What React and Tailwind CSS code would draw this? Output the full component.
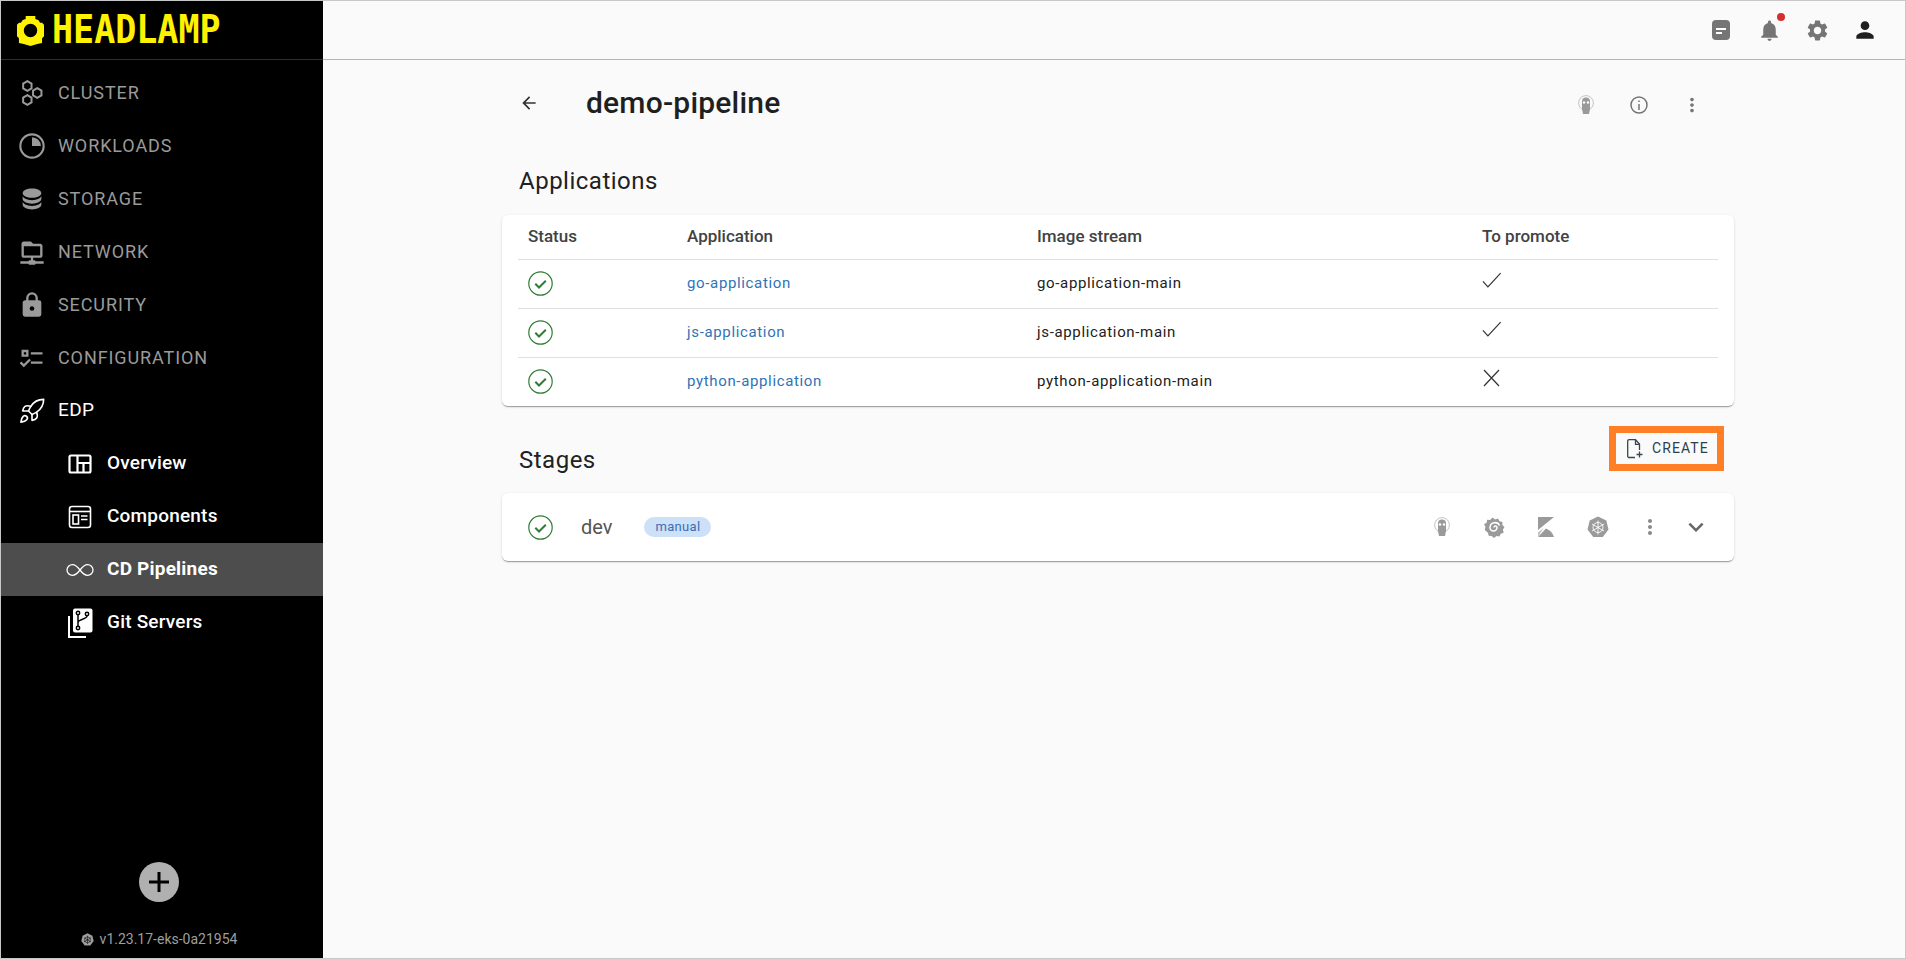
import { Rocket } from "lucide-react";
import {
  MdArrowBack,
  MdMoreVert,
  MdNotifications,
  MdPerson,
  MdSettings,
  MdExpandMore,
} from "react-icons/md";

const mdi = {
  database:
    "M12,3C7.58,3 4,4.79 4,7C4,9.21 7.58,11 12,11C16.42,11 20,9.21 20,7C20,4.79 16.42,3 12,3M4,9V12C4,14.21 7.58,16 12,16C16.42,16 20,14.21 20,12V9C20,11.21 16.42,13 12,13C7.58,13 4,11.21 4,9M4,14V17C4,19.21 7.58,21 12,21C16.42,21 20,19.21 20,17V14C20,16.21 16.42,18 12,18C7.58,18 4,16.21 4,14Z",
  network:
    "M15 20C15 19.45 14.55 19 14 19H13V17H19C20.11 17 21 16.11 21 15V7C21 5.9 20.11 5 19 5H13L11 3H5C3.9 3 3 3.9 3 5V15C3 16.11 3.9 17 5 17H11V19H10C9.45 19 9 19.45 9 20H2V22H9C9 22.55 9.45 23 10 23H14C14.55 23 15 22.55 15 22H22V20H15M5 15V7H19V15H5Z",
  lock:
    "M12,17A2,2 0 0,0 14,15C14,13.89 13.1,13 12,13A2,2 0 0,0 10,15A2,2 0 0,0 12,17M18,8A2,2 0 0,1 20,10V20A2,2 0 0,1 18,22H6A2,2 0 0,1 4,20V10C4,8.89 4.9,8 6,8H7V6A5,5 0 0,1 12,1A5,5 0 0,1 17,6V8H18M12,3A3,3 0 0,0 9,6V8H15V6A3,3 0 0,0 12,3Z",
  checks:
    "M3 5H9V11H3V5M5 7V9H7V7H5M11 7H21V9H11V7M11 15H21V17H11V15M5 20L1.5 16.5L2.91 15.09L5 17.17L9.59 12.59L11 14L5 20Z",
};

const Filled = ({ d, size = 28 }) => (
  <svg width={size} height={size} viewBox="0 0 24 24" fill="currentColor">
    <path d={d} />
  </svg>
);

const HexIcon = () => (
  <svg width="28" height="28" viewBox="0 0 24 24" fill="none" stroke="currentColor" strokeWidth="1.7">
    <path d="M8 1.8l3.6 2.1v4.2L8 10.2 4.4 8.1V3.9z" />
    <path d="M8 13.8l3.6 2.1v4.2L8 22.2l-3.6-2.1v-4.2z" />
    <path d="M16.5 7.8l3.6 2.1v4.2l-3.6 2.1-3.6-2.1V9.9z" />
  </svg>
);

const SliceIcon = () => (
  <svg width="28" height="28" viewBox="0 0 24 24" fill="none">
    <circle cx="12" cy="12" r="10" stroke="currentColor" strokeWidth="1.8" />
    <path d="M12 4.400a7.600 7.600 0 0 1 7.600 7.600H12z" fill="currentColor" />
  </svg>
);

const OverviewIcon = () => (
  <svg width="24" height="24" viewBox="0 0 24 24" fill="none" stroke="currentColor" strokeWidth="2.2">
    <rect x="1.500" y="3.500" width="21" height="17" rx="1.500" />
    <path d="M9.500 3.500v17M9.500 11H22M15.500 11v9" />
  </svg>
);

const ComponentsIcon = () => (
  <svg width="24" height="24" viewBox="0 0 24 24" fill="none" stroke="currentColor" strokeWidth="1.600">
    <rect x="1.500" y="1.500" width="21" height="21" rx="2.500" />
    <path d="M1.500 6.500h21" />
    <rect x="5" y="10" width="5.500" height="9" />
    <path d="M13 11h6.500M13 14.500h6.500" />
  </svg>
);

const InfinityIcon = () => (
  <svg width="30" height="18" viewBox="0 0 30 16" fill="none" stroke="currentColor" strokeWidth="1.300">
    <path d="M15 8c-2.500-3.400-4.700-5.400-7.600-5.400A5.400 5.400 0 0 0 2 8a5.400 5.400 0 0 0 5.400 5.400c2.900 0 5.100-2 7.600-5.400zm0 0c2.500-3.400 4.700-5.400 7.600-5.400A5.400 5.400 0 0 1 28 8a5.400 5.400 0 0 1-5.400 5.400c-2.900 0-5.100-2-7.600-5.400z" />
  </svg>
);

const GitIcon = () => (
  <svg width="26" height="30" viewBox="0 0 26 30" fill="none">
    <path d="M2 8v21h17" stroke="currentColor" strokeWidth="2" />
    <rect x="6" y="0.500" width="19.500" height="24" rx="2" fill="currentColor" />
    <g stroke="#000" strokeWidth="1.500">
      <circle cx="11" cy="5" r="1.700" />
      <circle cx="11" cy="20" r="1.700" />
      <circle cx="20" cy="6" r="1.700" />
      <path d="M11 6.700v11.600M20 7.700c0 4-9 3-9 7" />
    </g>
  </svg>
);

const LogoGear = () => (
  <svg width="27" height="31" viewBox="0 0 28 32">
    <path
      fillRule="evenodd"
      fill="#fff200"
      d="M9 1h10v3l3 1 2 3h2l2 2v12l-2 2v5l-5 1-7 2-7-2-5-1v-5l-2-2V10l2-2h2l2-3 3-1zM14 9a7 7 0 1 0 0 14 7 7 0 0 0 0-14z"
    />
  </svg>
);

const StatusIcon = () => (
  <svg width="25" height="25" viewBox="0 0 25 25" fill="none" stroke="#2e7d32">
    <circle cx="12.500" cy="12.500" r="11.700" strokeWidth="1.200" />
    <path d="M7.300 12.800l3.700 3.700 6.800-6.800" strokeWidth="2" />
  </svg>
);

const BulbIcon = ({ size = 20 }) => (
  <svg width={size} height={size} viewBox="0 0 20 20">
    <circle cx="10" cy="8" r="7.400" fill="none" stroke="#c4c4c4" strokeWidth="1" />
    <path d="M6 6.500a4 4 0 0 1 8 0V14l-1 5H7l-1-5z" fill="#9a9a9a" />
    <circle cx="8" cy="7.500" r="1.200" fill="#fff" />
    <circle cx="12" cy="7.500" r="1.200" fill="#fff" />
  </svg>
);

const GrafanaIcon = () => (
  <svg width="22" height="22" viewBox="0 0 22 22">
    <path
      d="M9.500 1.500l2.500 2 3-1 1.500 2.800 3 .7-.2 3 2.200 2-1.600 2.700.8 3-3 1-1.200 2.800-3-.4-2.500 1.800-2.300-2-3-.2-.8-3L1.800 14l.7-3-1.500-2.700 2.600-1.600.5-3 3 .3z"
      fill="#9a9a9a"
    />
    <path d="M11 11.500a1.500 1.500 0 0 1 3 0a3.500 3.500 0 0 1-7 0a5 5 0 0 1 9.500-2" fill="none" stroke="#fff" strokeWidth="1.500" />
  </svg>
);

const KibanaIcon = () => (
  <svg width="18" height="20" viewBox="0 0 18 20">
    <path d="M1 0h16L1 13z" fill="#9a9a9a" />
    <path d="M1 20l7.500-8 .5-.5C13 13 15.800 16 17 20z" fill="#9a9a9a" />
    <path d="M1 15.500L6.500 11 1 20z" fill="#c0c0c0" />
  </svg>
);

const K8sIcon = ({ size = 22, fill = "#9a9a9a", stroke = "#fff" }) => (
  <svg width={size} height={size} viewBox="0 0 22 22">
    <path d="M11 .5l8.300 4 2.200 9-5.700 7.500H6.200L.5 13.500l2.200-9z" fill={fill} />
    <g fill="none" stroke={stroke} strokeWidth="0.900">
      <circle cx="11" cy="11.500" r="5" />
      <path d="M11 4.500v14M5 8l12 7M17 8L5 15" />
    </g>
  </svg>
);

const NewFileIcon = () => (
  <svg width="18" height="20" viewBox="0 0 18 20" fill="none" stroke="#37474f" strokeWidth="1.300">
    <path d="M9 18.500H3a1.300 1.300 0 0 1-1.300-1.300V2a1.300 1.300 0 0 1 1.300-1.300h6.500l4 4.300V11" />
    <path d="M9.500 1v4.300h4" />
    <path d="M10.500 15.500h6M13.500 12.500v6" />
  </svg>
);

const NoteIcon = () => (
  <svg width="20" height="20" viewBox="0 0 20 20">
    <rect width="18" height="20" x="1" rx="4" fill="#757575" />
    <path d="M5 8h10v2H5zM5 12h6v2H5z" fill="#fff" />
  </svg>
);

const navItems = [
  { label: "CLUSTER", icon: <HexIcon /> },
  { label: "WORKLOADS", icon: <SliceIcon /> },
  { label: "STORAGE", icon: <Filled d={mdi.database} /> },
  { label: "NETWORK", icon: <Filled d={mdi.network} /> },
  { label: "SECURITY", icon: <Filled d={mdi.lock} /> },
  { label: "CONFIGURATION", icon: <Filled d={mdi.checks} /> },
];

const subItems = [
  { label: "Overview", icon: <OverviewIcon /> },
  { label: "Components", icon: <ComponentsIcon /> },
  { label: "CD Pipelines", icon: <InfinityIcon />, active: true },
  { label: "Git Servers", icon: <GitIcon /> },
];

const apps = [
  { name: "go-application", stream: "go-application-main", promote: true },
  { name: "js-application", stream: "js-application-main", promote: true },
  { name: "python-application", stream: "python-application-main", promote: false },
];

const Sidebar = () => (
  <aside className="flex w-[322px] shrink-0 flex-col bg-black">
    <div className="flex h-[59px] shrink-0 items-center gap-[8px] border-b border-[#2e2e2e] pl-[16px]">
      <LogoGear />
      <span className="inline-block scale-y-[1.12] font-['DejaVu_Sans_Mono',monospace] text-[35px] leading-none font-bold text-[#fff200]">
        HEADLAMP
      </span>
    </div>
    <nav className="flex flex-col pt-[6px]">
      {navItems.map((item) => (
        <div key={item.label} className="flex h-[53px] items-center text-[#9a9a9a]">
          <span className="flex w-[57px] justify-center pl-[5px]">{item.icon}</span>
          <span className="text-[18px] tracking-[0.9px]">{item.label}</span>
        </div>
      ))}
      <div className="flex h-[53px] items-center text-white">
        <span className="flex w-[57px] justify-center pl-[5px]">
          <Rocket size={28} strokeWidth={1.4} />
        </span>
        <span className="text-[19px] tracking-[0.4px]">EDP</span>
      </div>
      {subItems.map((item) => (
        <div
          key={item.label}
          className={`flex h-[53px] items-center text-white ${item.active ? "bg-[#4d4d4d] font-bold" : "font-medium"}`}
        >
          <span className="flex w-[106px] justify-center pl-[52px]">{item.icon}</span>
          <span className="text-[19px] tracking-[0.2px]">{item.label}</span>
        </div>
      ))}
    </nav>
    <div className="mt-auto flex flex-col items-center pr-[6px] pb-[9px]">
      <div className="flex h-[40px] w-[40px] items-center justify-center rounded-full bg-[#b0b0b0]">
        <svg width="24" height="24" viewBox="0 0 24 24" fill="#000">
          <path d="M10.500 2h3v8.500H22v3h-8.500V22h-3v-8.500H2v-3h8.500z" />
        </svg>
      </div>
      <div className="mt-[27px] flex items-center gap-[6px] text-[14px] leading-[20px] text-[#9e9e9e]">
        <K8sIcon size={13} fill="#9e9e9e" stroke="#000" />
        <span>v1.23.17-eks-0a21954</span>
      </div>
    </div>
  </aside>
);

const TopBar = () => (
  <header className="flex h-[59px] shrink-0 items-center justify-end border-b border-[#b5b5b5] pr-[16px]">
    <span className="flex w-[48px] justify-center"><NoteIcon /></span>
    <span className="relative flex w-[48px] justify-center text-[#757575]">
      <MdNotifications size={25} />
      <span className="absolute top-[-5px] right-[8px] h-[8px] w-[8px] rounded-full bg-[#d32f2f]" />
    </span>
    <span className="flex w-[48px] justify-center text-[#757575]"><MdSettings size={25} /></span>
    <span className="flex w-[48px] justify-center text-[#1f1f1f]"><MdPerson size={26} /></span>
  </header>
);

const Card = ({ className, children }) => (
  <div className={`rounded-[6px] bg-white shadow-[0_2px_1px_-1px_rgba(0,0,0,0.2),0_1px_1px_0_rgba(0,0,0,0.14),0_1px_3px_0_rgba(0,0,0,0.12)] ${className}`}>
    {children}
  </div>
);

const gridCols = "grid grid-cols-[159px_350px_445px_1fr] items-center pl-[10px]";

const ApplicationsTable = () => (
  <Card className="h-[191px] px-[16px]">
    <div className={`${gridCols} h-[45px] border-b border-[#e0e0e0] text-[17px] font-medium text-[#424242]`}>
      <span>Status</span>
      <span>Application</span>
      <span>Image stream</span>
      <span>To promote</span>
    </div>
    {apps.map((app, i) => (
      <div
        key={app.name}
        className={`${gridCols} pb-[2px] text-[15px] ${i < 2 ? "h-[49px] border-b border-[#e0e0e0]" : "h-[48px]"}`}
      >
        <StatusIcon />
        <span className="tracking-[0.65px] text-[#2f74b5]">{app.name}</span>
        <span className="tracking-[0.65px] text-[#212121]">{app.stream}</span>
        <span className="-mt-[6px]">
          {app.promote ? (
            <svg width="20" height="20" viewBox="0 0 22 22" fill="none" stroke="#333" strokeWidth="1.300">
              <path d="M1 12.500l5.500 6L20.500 3.500" />
            </svg>
          ) : (
            <svg width="19" height="20" viewBox="0 0 19 20" fill="none" stroke="#333" strokeWidth="1.200">
              <path d="M2 2l15 16M17 2L2 18" />
            </svg>
          )}
        </span>
      </div>
    ))}
  </Card>
);

const StageRow = () => (
  <Card className="flex h-[68px] items-center pr-[18px] pl-[26px]">
    <StatusIcon />
    <span className="ml-[28px] text-[20px] text-[#555]">dev</span>
    <span className="ml-[32px] flex h-[20px] w-[67px] items-center justify-center rounded-full bg-[#cce0f8] text-[13px] tracking-[0.3px] text-[#3f6db3]">
      manual
    </span>
    <div className="ml-auto flex items-center">
      <span className="flex w-[52px] justify-center"><BulbIcon /></span>
      <span className="flex w-[52px] justify-center"><GrafanaIcon /></span>
      <span className="flex w-[52px] justify-center"><KibanaIcon /></span>
      <span className="flex w-[52px] justify-center"><K8sIcon /></span>
      <span className="flex w-[52px] justify-center text-[#8a8a8a]"><MdMoreVert size={24} /></span>
      <span className="flex w-[40px] justify-center text-[#666]"><MdExpandMore size={30} /></span>
    </div>
  </Card>
);

const App = () => (
  <div className="flex h-[959px] w-[1906px] overflow-hidden border border-[#c8c8c8] bg-[#fafafa] font-['Roboto',sans-serif]">
    <Sidebar />
    <div className="flex min-w-0 flex-1 flex-col">
      <TopBar />
      <main className="w-[1411px] pl-[179px]">
        <div className="flex h-[86px] items-center pl-[17px]">
          <MdArrowBack size={20} className="text-[#333]" />
          <h1 className="-mt-[1px] ml-[47px] text-[30px] font-medium tracking-[0.2px] text-[#1f1f1f]">demo-pipeline</h1>
          <div className="mt-[4px] ml-auto flex items-center pr-[16px]">
            <span className="flex w-[53px] justify-center"><BulbIcon /></span>
            <span className="flex w-[53px] justify-center text-[#757575]">
              <svg width="20" height="20" viewBox="0 0 20 20" fill="none" stroke="currentColor" strokeWidth="1.500">
                <circle cx="10" cy="10" r="8" />
                <path d="M10 9v6M10 5.500v1.500" />
              </svg>
            </span>
            <span className="flex w-[53px] justify-center text-[#757575]"><MdMoreVert size={22} /></span>
          </div>
        </div>
        <div className="flex h-[69px] items-center pl-[17px]">
          <h2 className="text-[24px] tracking-[0.5px] text-[#212121]">Applications</h2>
        </div>
        <ApplicationsTable />
        <div className="mt-[20px] flex h-[67px] items-start justify-between pr-[10px] pl-[17px]">
          <h2 className="mt-[16px] text-[24px] tracking-[0.5px] text-[#212121]">Stages</h2>
          <div className="flex h-[45px] w-[115px] items-center gap-[8px] border-[7px] border-[#ff7f27] pl-[10px] text-[14px] tracking-[1.1px] text-[#2c3e50]">
            <NewFileIcon />
            <span>CREATE</span>
          </div>
        </div>
        <StageRow />
      </main>
    </div>
  </div>
);

export default App;
